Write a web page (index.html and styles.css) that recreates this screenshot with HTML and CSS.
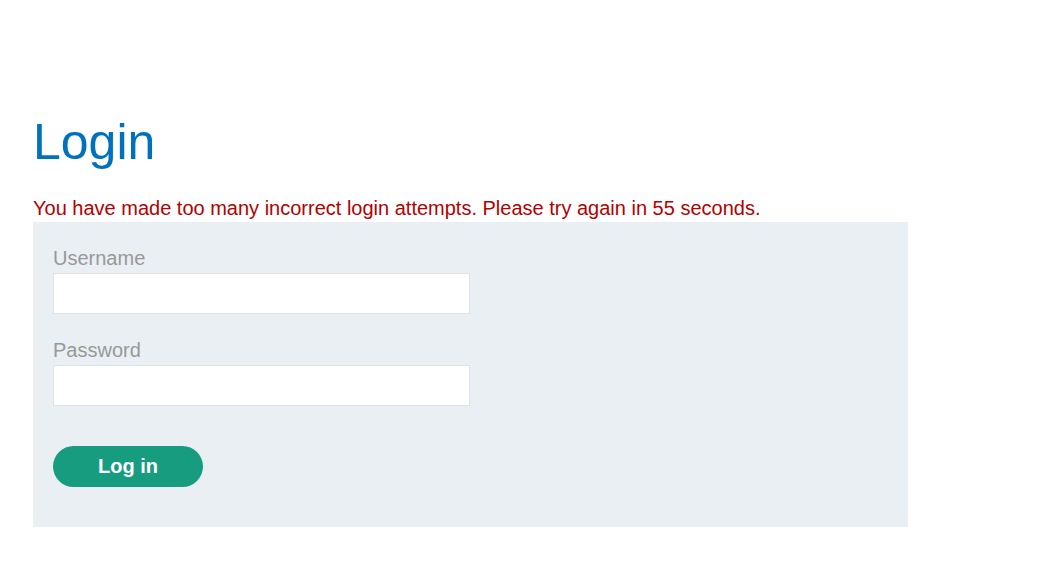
FILE: index.html
```html
<!DOCTYPE html>
<html>
<head>
<meta charset="utf-8">
<link rel="stylesheet" href="styles.css">
</head>
<body>
<main class="page">
  <h1 class="title">Login</h1>
  <p class="error">You have made too many incorrect login attempts. Please try again in 55 seconds.</p>
  <form class="login-form">
    <label class="field-label" for="username">Username</label>
    <input class="field-input" id="username" type="text">
    <label class="field-label" for="password">Password</label>
    <input class="field-input" id="password" type="password">
    <button class="btn" type="button">Log in</button>
  </form>
</main>
</body>
</html>
```
FILE: styles.css
```css
html, body {
  margin: 0;
  padding: 0;
  background: #fff;
  font-family: "Liberation Sans", Arial, sans-serif;
}
.page {
  padding: 110px 33px 0 33px;
  width: 875px;
}
.title {
  margin: 0;
  font-size: 50px;
  font-weight: normal;
  color: #0071bc;
  line-height: 64px;
}
.error {
  margin: 20px 0 0 0;
  font-size: 20px;
  line-height: 28px;
  color: #b50000;
}
.login-form {
  display: flex;
  flex-direction: column;
  align-items: flex-start;
  background: #e9eff2;
  padding: 24px 20px 40px 20px;
}
.field-label {
  font-size: 20px;
  line-height: 24px;
  color: #999;
  margin-bottom: 3px;
}
.field-input {
  box-sizing: border-box;
  width: 417px;
  height: 41px;
  border: 1px solid #e0e3e5;
  background: #fff;
  margin: 0 0 24px 0;
  padding: 0 8px;
}
.btn {
  margin-top: 16px;
  width: 150px;
  height: 41px;
  border: none;
  border-radius: 21px;
  background: #179c80;
  color: #fff;
  font-family: "Liberation Sans", Arial, sans-serif;
  font-size: 20px;
  font-weight: bold;
}
```
